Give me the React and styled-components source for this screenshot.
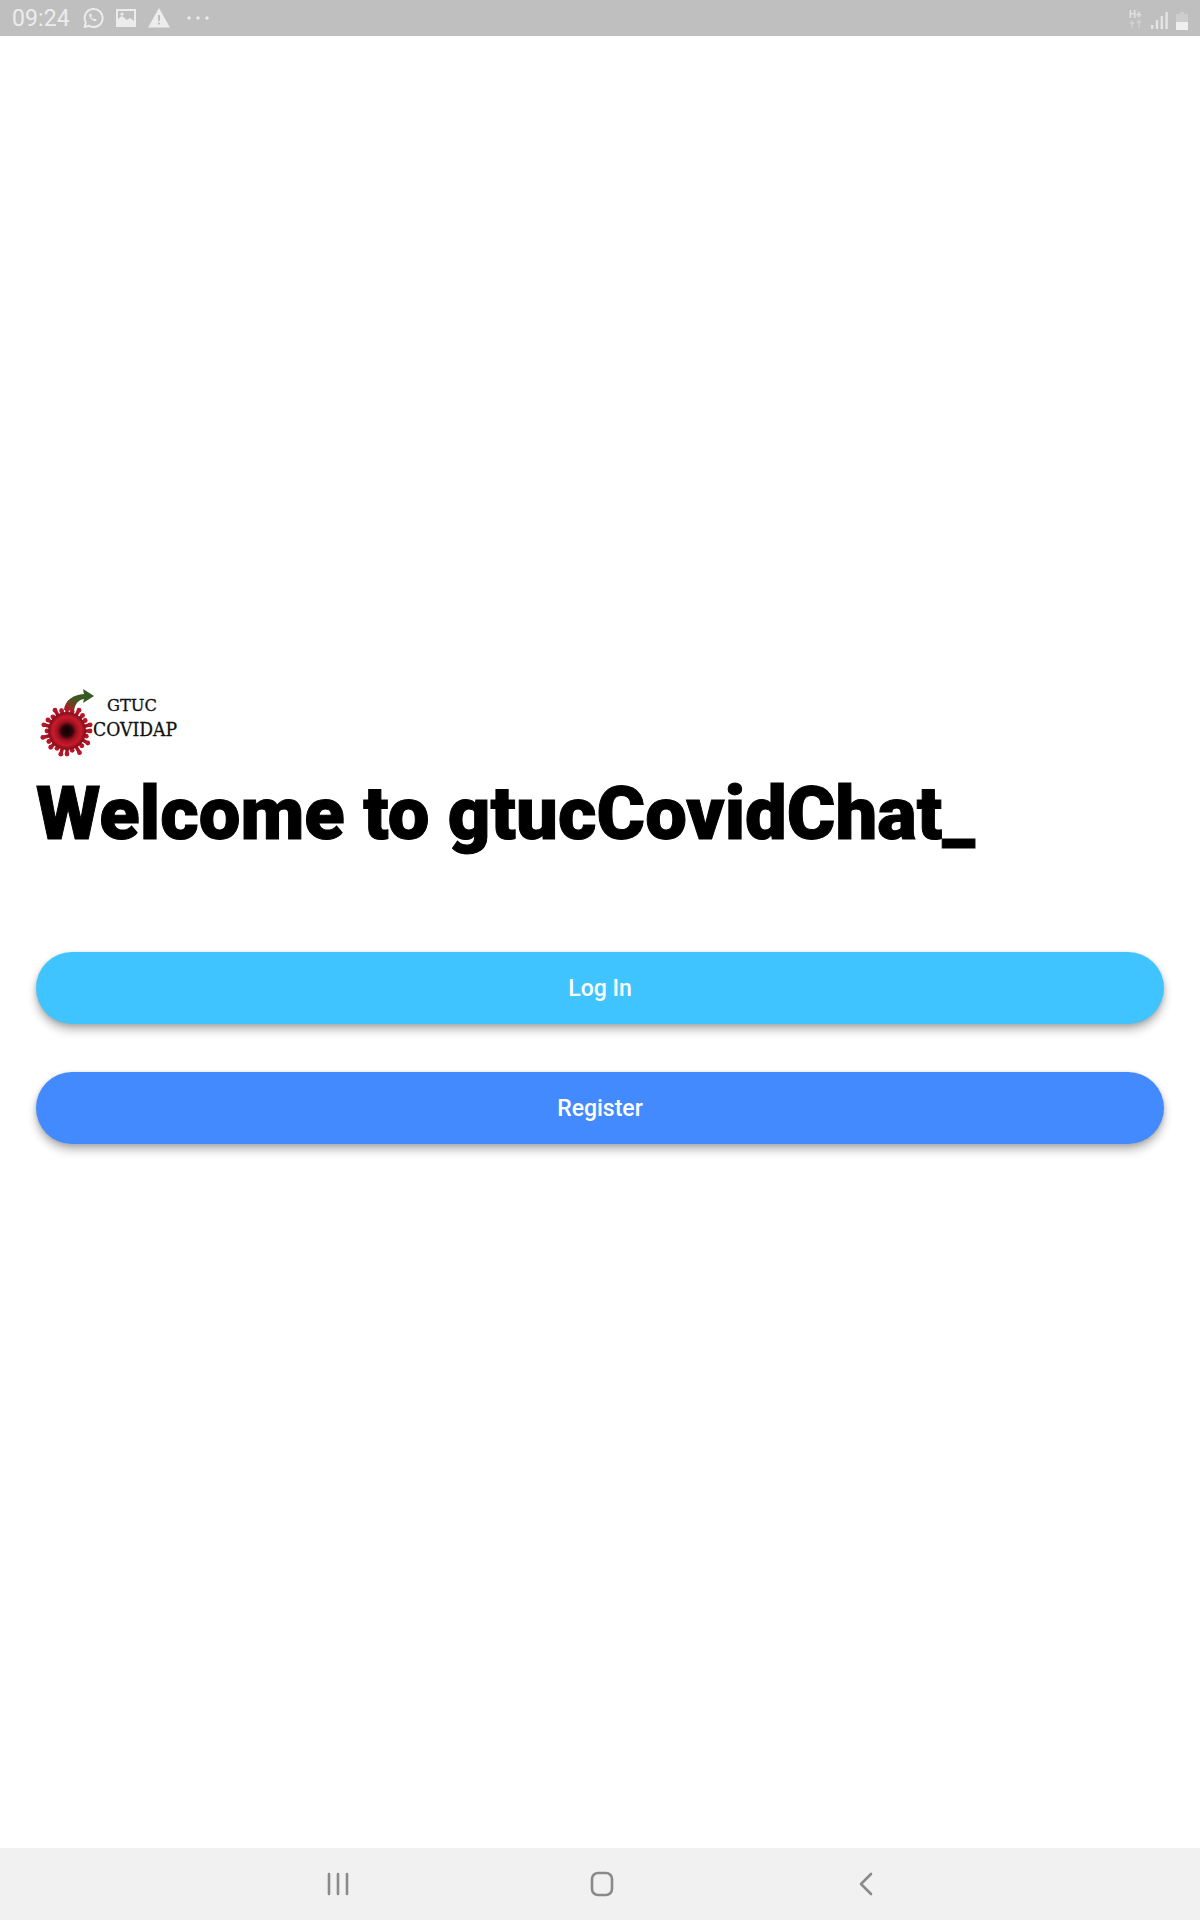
import React from "react";
import styled, { createGlobalStyle } from "styled-components";

const Global = createGlobalStyle`
  html, body { margin: 0; padding: 0; background: #fff; }
  body { font-family: Roboto, "Liberation Sans", sans-serif; }
`;

const Screen = styled.div`
  width: 1200px;
  height: 1920px;
  display: flex;
  flex-direction: column;
  overflow: hidden;
`;

const StatusBar = styled.div`
  height: 36px;
  background: #bfbfbf;
  display: flex;
  align-items: center;
  justify-content: space-between;
  padding: 0 12px;
  color: #ececec;
`;

const StatusGroup = styled.div`
  display: flex;
  align-items: center;
  gap: ${(props) => props.$gap || 0}px;
`;

const Clock = styled.span`
  font-size: 23px;
  font-weight: 400;
  letter-spacing: 0.1px;
`;

const Main = styled.main`
  flex: 1;
  padding: 652px 36px 0;
  display: flex;
  flex-direction: column;
`;

const Title = styled.h1`
  margin: 12px 0 0;
  font-size: 74.2px;
  line-height: 84px;
  font-weight: 900;
  color: #000;
  white-space: nowrap;
  -webkit-text-stroke: 1px #000;
`;

const Buttons = styled.div`
  margin-top: 96px;
  display: flex;
  flex-direction: column;
  gap: 48px;
`;

const PillButton = styled.button`
  height: 72px;
  border: 0;
  border-radius: 36px;
  background: ${(props) => props.$color};
  color: #fff;
  font-family: Roboto, sans-serif;
  font-size: 23px;
  font-weight: 500;
  box-shadow: 0 6px 10px rgba(0, 0, 0, 0.28), 0 1px 4px rgba(0, 0, 0, 0.14);
`;

const NavBar = styled.nav`
  height: 72px;
  background: #f1f1f1;
  display: grid;
  grid-template-columns: repeat(3, 264px);
  justify-content: center;
  justify-items: center;
  align-items: center;
  padding-left: 4px;
`;

// spike lengths vary so the virus outline looks rough like the bitmap logo
const SPIKE_LENGTHS = [25, 22, 26, 23, 27, 22, 25, 26, 22, 25, 23, 27, 22, 26, 24, 22, 26, 23, 25, 22, 26, 24, 23, 26];

function Logo() {
  const cx = 31;
  const cy = 43;
  return (
    <svg width="150" height="72" viewBox="0 0 150 72" style={{ display: "block", flex: "none" }}>
      <defs>
        <linearGradient id="arrowFill" x1="0" y1="1" x2="1" y2="0">
          <stop offset="0" stopColor="#b02020" />
          <stop offset="0.5" stopColor="#3a5a22" />
          <stop offset="1" stopColor="#2c5a20" />
        </linearGradient>
        <radialGradient id="virusFill">
          <stop offset="0" stopColor="#0c0204" />
          <stop offset="0.28" stopColor="#2a060a" />
          <stop offset="0.5" stopColor="#a01020" />
          <stop offset="0.75" stopColor="#c81c2c" />
          <stop offset="1" stopColor="#7d0c18" />
        </radialGradient>
      </defs>
      <path
        d="M28 22 C29 12 37 7 48 6 L47 1 L58 8 L47 15 L48 11 C42 12 39 16 38 23 Z"
        fill="url(#arrowFill)"
      />
      {SPIKE_LENGTHS.map((len, i) => {
        const a = (i / SPIKE_LENGTHS.length) * Math.PI * 2;
        const x = cx + Math.cos(a) * (len - 2);
        const y = cy + Math.sin(a) * (len - 2);
        return (
          <g key={i}>
            <line x1={cx} y1={cy} x2={x} y2={y} stroke="#a81222" strokeWidth="3.500" />
            <circle cx={x} cy={y} r="2.400" fill="#b81626" />
          </g>
        );
      })}
      <circle cx={cx} cy={cy} r="19" fill="url(#virusFill)" />
      <text x="71" y="23" fontFamily="'DejaVu Serif', serif" fontSize="17" fill="#111" stroke="#111" strokeWidth="0.3" textLength="50" lengthAdjust="spacingAndGlyphs">GTUC</text>
      <text x="57" y="48" fontFamily="'DejaVu Serif', serif" fontSize="19" fill="#111" stroke="#111" strokeWidth="0.3" textLength="84" lengthAdjust="spacingAndGlyphs">COVIDAP</text>
    </svg>
  );
}

function WhatsappIcon() {
  return (
    <svg width="22" height="22" viewBox="0 0 22 22" fill="none" stroke="#ececec" strokeWidth="2">
      <path d="M2.5 20l1.3-4.6A9 9 0 1 1 7 18.7z" strokeLinejoin="round" />
      <path d="M8 6.5c-1.2 1 -1 3 1 5.3s4 3 5.2 2l.4-1.4-2.2-1-.9.8c-1-.4-2-1.500-2.400-2.500l.8-.9-1-2.300z" fill="#ececec" stroke="none" />
    </svg>
  );
}

function ImageIcon() {
  return (
    <svg width="20" height="20" viewBox="0 0 20 20">
      <path fillRule="evenodd" fill="#ececec" d="M0 1h20v18H0z M2 3v8l4-3 5 4 3-2 4 3V3z" />
      <circle cx="6" cy="6" r="1.600" fill="#ececec" />
    </svg>
  );
}

function WarningIcon() {
  return (
    <svg width="22" height="20" viewBox="0 0 22 20">
      <path fillRule="evenodd" fill="#ececec" d="M11 0l11 19.500H0z M10 7v6h2V7z M10 14.500v2h2v-2z" />
    </svg>
  );
}

function MoreIcon() {
  return (
    <svg width="24" height="6" viewBox="0 0 24 6" fill="#ececec" style={{ marginLeft: 4 }}>
      <circle cx="3" cy="3" r="1.700" />
      <circle cx="12" cy="3" r="1.700" />
      <circle cx="21" cy="3" r="1.700" />
    </svg>
  );
}

function NetworkIcon() {
  return (
    <svg width="14" height="19" viewBox="0 0 14 19">
      <text x="0" y="9" fontFamily="Roboto, sans-serif" fontSize="10" fontWeight="700" fill="#e2e2e2">H+</text>
      <path d="M3 19v-6M1 15l2-2.500 2 2.500M10 19v-7M8 14l2-2.500 2 2.500" fill="none" stroke="#d0d0d0" strokeWidth="1.500" />
    </svg>
  );
}

function SignalIcon() {
  return (
    <svg width="17" height="18" viewBox="0 0 17 18" fill="#e4e4e4" style={{ marginTop: 6 }}>
      <rect x="0" y="13" width="2.400" height="4" />
      <rect x="4.800" y="8" width="2.400" height="9" />
      <rect x="9.600" y="4" width="2.400" height="13" />
      <rect x="14.400" y="0" width="2.400" height="17" />
    </svg>
  );
}

function BatteryIcon() {
  return (
    <svg width="12" height="19" viewBox="0 0 12 19" style={{ marginTop: 6 }}>
      <path d="M4 0h4v2h4v8H0V2h4z" fill="#cdcdcd" />
      <rect x="0" y="10" width="12" height="8" fill="#efefef" />
    </svg>
  );
}

function RecentsIcon() {
  return (
    <svg width="22" height="24" viewBox="0 0 22 24" stroke="#8a8a8a" strokeWidth="2.600" strokeLinecap="round">
      <path d="M2 2v20M11 2v20M20 2v20" />
    </svg>
  );
}

function HomeIcon() {
  return (
    <svg width="24" height="26" viewBox="0 0 24 26" fill="none" stroke="#8a8a8a" strokeWidth="2.600">
      <rect x="2" y="2" width="20" height="22" rx="6" />
    </svg>
  );
}

function BackIcon() {
  return (
    <svg width="14" height="24" viewBox="0 0 14 24" fill="none" stroke="#8a8a8a" strokeWidth="2.600" strokeLinecap="round" strokeLinejoin="round">
      <path d="M12 2L2 12l10 10" />
    </svg>
  );
}

export default function App() {
  return (
    <Screen>
      <Global />
      <StatusBar>
        <StatusGroup $gap={12}>
          <Clock>09:24</Clock>
          <WhatsappIcon />
          <ImageIcon />
          <WarningIcon />
          <MoreIcon />
        </StatusGroup>
        <StatusGroup $gap={8}>
          <NetworkIcon />
          <SignalIcon />
          <BatteryIcon />
        </StatusGroup>
      </StatusBar>
      <Main>
        <Logo />
        <Title>Welcome to gtucCovidChat_</Title>
        <Buttons>
          <PillButton $color="#40c4ff">Log In</PillButton>
          <PillButton $color="#448aff">Register</PillButton>
        </Buttons>
      </Main>
      <NavBar>
        <RecentsIcon />
        <HomeIcon />
        <BackIcon />
      </NavBar>
    </Screen>
  );
}
